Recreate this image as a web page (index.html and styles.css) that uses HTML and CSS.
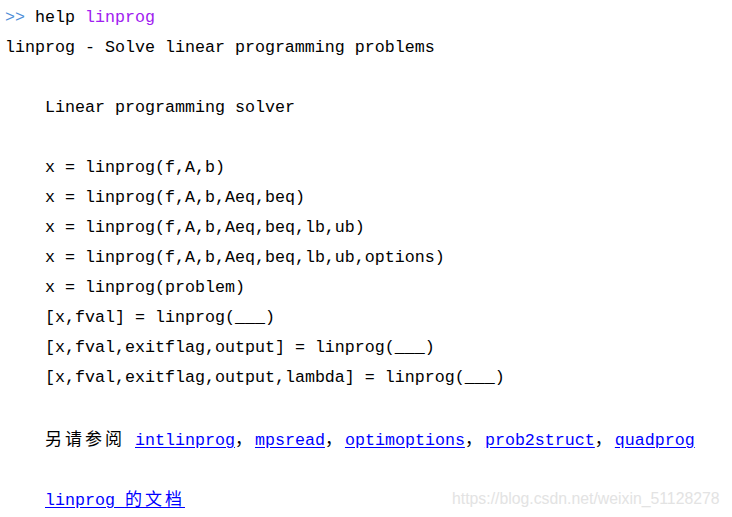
FILE: index.html
```html
<!DOCTYPE html>
<html>
<head>
<meta charset="utf-8">
<link rel="stylesheet" href="styles.css">
</head>
<body>
<div class="console">
  <div class="line"><span class="prompt">&gt;&gt;</span> help <span class="str">linprog</span></div>
  <div class="line">linprog - Solve linear programming problems</div>
  <div class="line"> </div>
  <div class="line ind">Linear programming solver</div>
  <div class="line"> </div>
  <div class="line ind">x = linprog(f,A,b)</div>
  <div class="line ind">x = linprog(f,A,b,Aeq,beq)</div>
  <div class="line ind">x = linprog(f,A,b,Aeq,beq,lb,ub)</div>
  <div class="line ind">x = linprog(f,A,b,Aeq,beq,lb,ub,options)</div>
  <div class="line ind">x = linprog(problem)</div>
  <div class="line ind">[x,fval] = linprog(___)</div>
  <div class="line ind">[x,fval,exitflag,output] = linprog(___)</div>
  <div class="line ind">[x,fval,exitflag,output,lambda] = linprog(___)</div>
  <div class="line"> </div>
  <div class="line ind"><span class="cjk">另请参阅</span> <a class="link" href="#">intlinprog</a><span class="cjk">，</span><a class="link" href="#">mpsread</a><span class="cjk">，</span><a class="link" href="#">optimoptions</a><span class="cjk">，</span><a class="link" href="#">prob2struct</a><span class="cjk">，</span><a class="link" href="#">quadprog</a></div>
  <div class="line"> </div>
  <div class="line ind"><a class="link" href="#">linprog <span class="cjk">的文档</span></a></div>
</div>
<div class="watermark">https://blog.csdn.net/weixin_51128278</div>
</body>
</html>
```
FILE: styles.css
```css
html, body {
  margin: 0;
  padding: 0;
  background: #ffffff;
}
body {
  width: 732px;
  height: 517px;
  overflow: hidden;
  position: relative;
}
.console {
  padding: 3px 0 0 5px;
  font-family: "Liberation Mono", "DejaVu Sans Mono", monospace;
  font-size: 16.667px;
  color: #000000;
}
.line {
  height: 30px;
  line-height: 30px;
  white-space: pre;
}
.ind {
  padding-left: 40px;
}
.prompt {
  color: #4f8fd8;
}
.str {
  color: #a020f0;
}
.link {
  color: #0000ff;
  text-decoration: underline;
  text-underline-offset: 2px;
}
.cjk {
  font-family: "Noto Sans CJK SC", sans-serif;
  font-size: 17px;
  letter-spacing: 3px;
}
.watermark {
  position: absolute;
  left: 452px;
  top: 490px;
  font-family: "Liberation Sans", Arial, sans-serif;
  font-size: 15.8px;
  color: #e3e3e3;
  white-space: nowrap;
}
```
